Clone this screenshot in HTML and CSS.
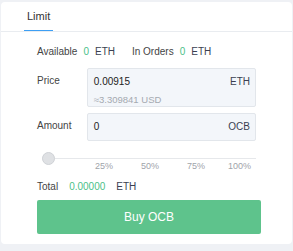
FILE: index.html
```html
<!DOCTYPE html>
<html lang="en">
<head>
  <meta charset="UTF-8" />
  <meta name="viewport" content="width=device-width, initial-scale=1.0"/>
  <title>Limit order</title>
  <link rel="stylesheet" href="styles.css">
</head>
<body>
  <div class="panel">
    <div class="tabs">
      <span class="tab active">Limit</span>
    </div>

    <div class="order-form">
      <!-- BALANCES -->
      <div class="balances">
        <span class="label">Available</span>
        <span class="num">0</span>
        <span class="unit">ETH</span>
        <span class="label orders">In Orders</span>
        <span class="num">0</span>
        <span class="unit">ETH</span>
      </div>

      <!-- PRICE -->
      <div class="field">
        <span class="field-label">Price</span>
        <div class="input-box">
          <div class="input-line">
            <span class="value">0.00915</span>
            <span class="suffix">ETH</span>
          </div>
          <div class="hint">≈3.309841 USD</div>
        </div>
      </div>

      <!-- AMOUNT -->
      <div class="field">
        <span class="field-label">Amount</span>
        <div class="input-box">
          <div class="input-line tall">
            <span class="value">0</span>
            <span class="suffix">OCB</span>
          </div>
        </div>
      </div>

      <div class="slider">
        <span class="thumb"></span>
      </div>
      <div class="marks">
        <span>25%</span>
        <span>50%</span>
        <span>75%</span>
        <span>100%</span>
      </div>

      <div class="total">
        <span class="label">Total</span>
        <span class="num">0.00000</span>
        <span class="unit">ETH</span>
      </div>

      <button class="buy-btn">Buy OCB</button>
    </div>
  </div>
</body>
</html>
```

FILE: styles.css
```css
body {
  margin: 0;
  padding: 0;
  background-color: #eff1f5;
  font-family: "Liberation Sans", Arial, sans-serif;
  color: #333;
}

.panel {
  margin: 2px 1px 0 1px;
  height: 242px;
  background-color: #fff;
  border-radius: 4px;
}

.tabs {
  height: 29px;
  border-bottom: 1px solid #e9ecf0;
  padding-left: 23px;
  display: flex;
}

.tab {
  font-size: 11px;
  line-height: 28px;
  padding: 0 3px;
  color: #333;
}

.tab.active {
  border-bottom: 1px solid #3d9ff4;
}

.order-form {
  padding: 13px 36px 0 36px;
}

.balances,
.total {
  display: flex;
  align-items: center;
  font-size: 10px;
  line-height: 14px;
}

.balances .num,
.total .num {
  color: #4cbf88;
  margin: 0 6px;
}

.unit {
  color: #3a3f51;
}

.balances .orders {
  margin-left: 17px;
}

.label {
  color: #444;
}

.field {
  display: flex;
  margin-top: 9px;
}

.field + .field {
  margin-top: 6px;
}

.field-label {
  width: 51px;
  font-size: 10px;
  line-height: 14px;
  padding-top: 6px;
  color: #444;
}

.input-box {
  width: 160px;
  padding: 6px 5px 0 6px;
  background-color: #f3f6fa;
  border: 1px solid #e2e6eb;
  border-radius: 2px;
}

.input-line {
  display: flex;
  justify-content: space-between;
  font-size: 10px;
  line-height: 14px;
  color: #222;
}

.input-line.tall {
  margin-top: -6px;
  line-height: 26px;
}

.suffix {
  color: #3a3f51;
}

.hint {
  margin-top: 5px;
  font-size: 9.5px;
  line-height: 12px;
  color: #a5a9b0;
}

.slider {
  position: relative;
  height: 13px;
  margin: 11px 0 0 5px;
  width: 214px;
}

.slider::before {
  content: "";
  position: absolute;
  left: 0;
  right: 0;
  top: 6px;
  height: 1px;
  background-color: #e6e8eb;
}

.thumb {
  position: absolute;
  left: 0;
  top: 0;
  width: 11px;
  height: 11px;
  border: 1px solid #cfd2d6;
  background-color: #dfe1e4;
  border-radius: 50%;
}

.marks {
  display: grid;
  grid-template-columns: repeat(4, 46px);
  justify-content: end;
  width: 214px;
  margin-top: -5px;
  font-size: 9px;
  line-height: 12px;
  color: #a0a4aa;
  text-align: right;
}

.total {
  margin-top: 8px;
}

.total .num {
  margin: 0 11px;
}

.buy-btn {
  display: block;
  width: 224px;
  height: 34px;
  margin-top: 6px;
  background-color: #5ec38c;
  color: #fff;
  border: none;
  border-radius: 2px;
  font-family: "Liberation Sans", Arial, sans-serif;
  font-size: 12px;
  cursor: pointer;
}
```
